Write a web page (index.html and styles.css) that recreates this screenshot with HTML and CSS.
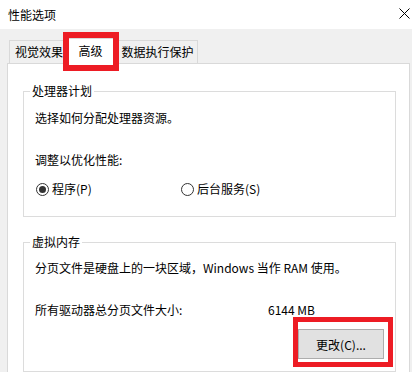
FILE: index.html
```html
<!DOCTYPE html>
<html lang="zh-CN">
<head>
   <meta charset="utf-8">
   <title>性能选项</title>
   <link rel="stylesheet" href="styles.css">
</head>
<body>
   <div class="window">
      <div class="titlebar">
         <span class="title">性能选项</span>
         <svg class="close" width="11" height="11" viewBox="0 0 11 11">
            <path d="M0.5 0.5 L10.5 10.5 M10.5 0.5 L0.5 10.5" stroke="#000" stroke-width="1" fill="none"/>
         </svg>
      </div>
      <div class="content">
         <div class="tabs">
            <div class="tab tab-first">视觉效果</div>
            <div class="tab tab-active">高级</div>
            <div class="tab tab-last">数据执行保护</div>
         </div>
         <div class="panel">
            <fieldset class="group group-cpu">
               <legend>处理器计划</legend>
               <p class="line line-first">选择如何分配处理器资源。</p>
               <p class="line line-gap">调整以优化性能:</p>
               <div class="radios">
                  <label class="radio radio-first"><span class="dot dot-on"></span>程序(P)</label>
                  <label class="radio"><span class="dot"></span>后台服务(S)</label>
               </div>
            </fieldset>
            <fieldset class="group group-mem">
               <legend>虚拟内存</legend>
               <p class="line line-first">分页文件是硬盘上的一块区域，Windows 当作 RAM 使用。</p>
               <div class="line line-gap size-row">
                  <span class="size-label">所有驱动器总分页文件大小:</span>
                  <span>6144 MB</span>
               </div>
               <div class="btn-row">
                  <button class="btn">更改(C)...</button>
               </div>
            </fieldset>
         </div>
      </div>
      <div class="mark mark-tab"></div>
      <div class="mark mark-btn"></div>
   </div>
</body>
</html>
```

FILE: styles.css
```css
* {
    margin: 0;
    padding: 0;
    box-sizing: border-box;
    font-family: "Noto Sans CJK SC", "Microsoft YaHei", sans-serif;
}
body {
    background: #fff;
    width: 412px;
    height: 372px;
    overflow: hidden;
    font-size: 12px;
    color: #000;
}
.window {
    position: relative;
    width: 412px;
    height: 372px;
}
.titlebar {
    height: 29px;
    display: flex;
    justify-content: space-between;
    align-items: flex-start;
    padding: 0 2px 0 8px;
    background: #fff;
}
.title {
    line-height: 30px;
}
.close {
    margin-top: 8px;
}
.content {
    background: #f0f0f0;
    height: 343px;
    padding: 10px 2px 0 7px;
}
.tabs {
    display: flex;
    height: 24px;
    align-items: flex-end;
    padding-left: 2px;
}
.tab {
    height: 23px;
    line-height: 22px;
    border: 1px solid #d9d9d9;
    border-bottom: none;
    background: #f0f0f0;
    text-align: center;
}
.tab-first {
    width: 56px;
    padding-left: 5px;
    text-align: left;
    border-right: none;
}
.tab-active {
    width: 55px;
    height: 26px;
    margin-left: -2px;
    margin-bottom: -1px;
    background: #fff;
    position: relative;
    z-index: 1;
    line-height: 24px;
}
.tab-last {
    width: 80px;
    border-left: none;
}
.panel {
    background: #fff;
    border: 1px solid #d9d9d9;
    height: 320px;
    padding: 20px 13px 0 15px;
}
.group {
    border: 1px solid #dcdcdc;
    padding: 0 11px 19px 11px;
    min-inline-size: 0;
}
.group legend {
    margin-left: -5px;
    padding: 0 2px;
    line-height: 14px;
}
.line {
    line-height: 16px;
    white-space: nowrap;
}
.line-first {
    margin-top: 12px;
}
.line-gap {
    margin-top: 26px;
}
.radios {
    display: flex;
    margin-top: 13px;
    height: 16px;
    align-items: center;
}
.radio {
    display: flex;
    align-items: center;
    gap: 3px;
    line-height: 16px;
}
.radio-first {
    width: 145px;
    margin-left: 1px;
}
.dot {
    width: 13px;
    height: 13px;
    border: 1px solid #333;
    border-radius: 50%;
    background: #fff;
    position: relative;
}
.dot-on::after {
    content: "";
    position: absolute;
    left: 2px;
    top: 2px;
    width: 7px;
    height: 7px;
    border-radius: 50%;
    background: #333;
}
.group-mem {
    margin-top: 18px;
    padding-bottom: 12px;
}
.group-mem .line-first {
    margin-top: 11px;
}
.size-row {
    display: flex;
}
.size-label {
    width: 233px;
}
.btn-row {
    display: flex;
    justify-content: flex-end;
    margin-top: 11px;
}
.btn {
    width: 86px;
    height: 30px;
    background: #e1e1e1;
    border: 1px solid #adadad;
    font-size: 12px;
    color: #000;
}
.mark {
    position: absolute;
    border: 6px solid #ed1c24;
    z-index: 5;
}
.mark-tab {
    left: 63px;
    top: 32px;
    width: 56px;
    height: 39px;
}
.mark-btn {
    left: 293px;
    top: 317px;
    width: 100px;
    height: 50px;
    border-width: 5px;
}
```
